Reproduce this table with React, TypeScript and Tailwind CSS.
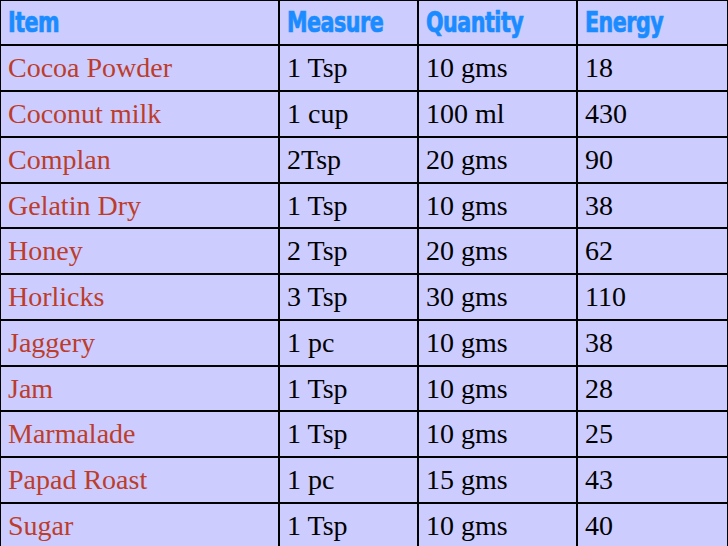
import React from 'react';

const rows: [string, string, string, string][] = [
  ['Cocoa Powder', '1 Tsp', '10 gms', '18'],
  ['Coconut milk', '1 cup', '100 ml', '430'],
  ['Complan', '2Tsp', '20 gms', '90'],
  ['Gelatin Dry', '1 Tsp', '10 gms', '38'],
  ['Honey', '2 Tsp', '20 gms', '62'],
  ['Horlicks', '3 Tsp', '30 gms', '110'],
  ['Jaggery', '1 pc', '10 gms', '38'],
  ['Jam', '1 Tsp', '10 gms', '28'],
  ['Marmalade', '1 Tsp', '10 gms', '25'],
  ['Papad Roast', '1 pc', '15 gms', '43'],
  ['Sugar', '1 Tsp', '10 gms', '40'],
];

const headers = ['Item', 'Measure', 'Quantity', 'Energy'];

// rows that sit one pixel shorter, so the lines land where the slide has them
const shortRows = [3, 7];

const App: React.FC = () => {
  return (
    <div className="w-[728px] h-[546px] overflow-hidden bg-[#ccccff]">
      <div className="bg-black pt-[1px] px-[1px] pb-[2px]">
        <div className="grid grid-cols-[277px_137px_157px_149px] gap-[2px]">
          {headers.map(h => (
            <div key={h} className="h-[43px] bg-[#ccccff] pl-[7px] flex items-center">
              <span className="text-[#1a8cff] text-[28px] font-bold tracking-[-0.6px] origin-left scale-x-[0.82] inline-block [-webkit-text-stroke:0.7px_#1a8cff]" style={{ fontFamily: '"DejaVu Sans Condensed", "DejaVu Sans", sans-serif' }}>
                {h}
              </span>
            </div>
          ))}
          {rows.map((r, ri) =>
            r.map((c, i) => (
              <div key={r[0] + i}
                className={`${shortRows.includes(ri) ? 'h-[43px] leading-[43px]' : 'h-[44px] leading-[44px]'} bg-[#ccccff] pl-[7px] text-[28px] whitespace-nowrap ${i === 0 ? 'text-[#bc3d2b]' : 'text-black'}`}
                style={{ fontFamily: '"Liberation Serif", "Times New Roman", serif' }}>
                {c}
              </div>
            ))
          )}
        </div>
      </div>
    </div>
  );
};

export default App;
